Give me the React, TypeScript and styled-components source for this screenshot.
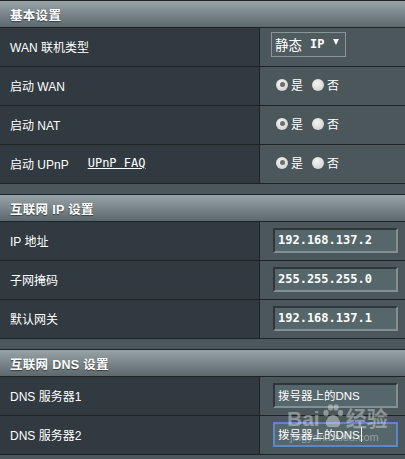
import styled, { createGlobalStyle } from 'styled-components';

const GlobalStyle = createGlobalStyle`
  html, body {
    margin: 0;
    padding: 0;
    background: #4b575b;
  }
  body {
    font-family: "Liberation Sans", Arial, "Noto Sans CJK SC", sans-serif;
    width: 405px;
    overflow: hidden;
  }
`;

const Page = styled.div`
  width: 405px;
  display: flex;
  flex-direction: column;
  gap: 10px;
  background: #4b575b;
`;

const Section = styled.section`
  border-top: 1px solid #1e2326;
`;

const Header = styled.div`
  height: 27px;
  box-sizing: border-box;
  padding-left: 10px;
  display: flex;
  align-items: center;
  background: linear-gradient(#98a3a7, #5c686d);
  color: #fff;
  font-weight: bold;
  font-size: 12.5px;
  letter-spacing: 0.3px;
  text-shadow: 0 1px 1px rgba(0, 0, 0, 0.5);
  border-bottom: 1px solid #1e2326;
`;

const Row = styled.div`
  display: grid;
  grid-template-columns: 260px 1fr;
  height: 39px;
  box-sizing: border-box;
  border-bottom: 1px solid #1e2326;
`;

const Label = styled.div`
  background: #313a40;
  border-right: 1px solid #1e2326;
  color: #fff;
  font-size: 12px;
  padding-left: 10px;
  display: flex;
  align-items: center;
  padding-bottom: 2px;
`;

const Link = styled.a`
  color: #fff;
  font-family: "DejaVu Sans Mono", "Liberation Mono", monospace;
  font-size: 12px;
  text-decoration: underline;
  margin-left: 19px;
  white-space: pre;
`;

const Cell = styled.div`
  background: #4b575b;
  display: flex;
  align-items: center;
  padding-left: 11px;
`;

const Select = styled.div`
  width: 75px;
  height: 25px;
  box-sizing: border-box;
  border: 1px solid #8b9598;
  background: #4e5b5f;
  color: #fff;
  display: flex;
  align-items: center;
  padding: 0 0 0 3px;
  font-size: 13.5px;
  margin-top: -6px;
`;

const Mono = styled.span`
  font-family: "DejaVu Sans Mono", "Liberation Mono", monospace;
  font-weight: bold;
  font-size: 12px;
  margin-left: 8px;
`;

const Caret = styled.span`
  width: 0;
  height: 0;
  border-left: 3px solid transparent;
  border-right: 3px solid transparent;
  border-top: 6px solid #fff;
  margin-left: 9px;
  margin-top: -4px;
`;

const RadioGroup = styled.div`
  display: flex;
  align-items: center;
  color: #fff;
  font-size: 12px;
  margin-left: 5px;
  margin-top: -3px;
`;

const Radio = styled.span<{ $checked?: boolean }>`
  width: 12px;
  height: 12px;
  border-radius: 50%;
  background: radial-gradient(circle at 40% 35%, #f4f4f4, #c9c9c9);
  box-sizing: border-box;
  display: inline-flex;
  align-items: center;
  justify-content: center;
  margin-right: 3px;
  &::after {
    content: '';
    width: 5px;
    height: 5px;
    border-radius: 50%;
    background: ${(p) => (p.$checked ? '#6d6d6d' : 'transparent')};
  }
`;

const Option = styled.span`
  margin-right: 9px;
`;

const Input = styled.div<{ $focus?: boolean; $mono?: boolean }>`
  width: 125px;
  height: 25px;
  box-sizing: border-box;
  margin-left: 2px;
  margin-top: -2px;
  background: #56676b;
  border: 2px solid;
  border-color: ${(p) =>
    p.$focus ? '#5f86c9' : '#2e3639 #829094 #829094 #2e3639'};
  color: #fff;
  display: flex;
  align-items: center;
  padding-left: 3px;
  font-family: ${(p) =>
    p.$mono
      ? '"DejaVu Sans Mono", "Liberation Mono", monospace'
      : '"Liberation Sans", Arial, "Noto Sans CJK SC", sans-serif'};
  font-size: ${(p) => (p.$mono ? '12px' : '11.5px')};
  font-weight: ${(p) => (p.$mono ? 'bold' : 'normal')};
  white-space: nowrap;
`;

const Cursor = styled.span`
  display: inline-block;
  width: 1px;
  height: 15px;
  background: #fff;
  margin-left: 1px;
`;

const Watermark = styled.div`
  position: absolute;
  left: 287px;
  top: 403px;
  color: rgba(225, 230, 232, 0.45);
  font-family: "Liberation Sans", Arial, "Noto Sans CJK SC", sans-serif;
  pointer-events: none;
  line-height: 1;
`;

const WmTop = styled.div`
  font-size: 21px;
  font-weight: bold;
  display: flex;
  align-items: flex-end;
  gap: 1px;
`;

const WmSub = styled.div`
  font-size: 11px;
  margin-left: 3px;
  margin-top: 3px;
`;

const Wrap = styled.div`
  position: relative;
`;

function YesNo() {
  return (
    <RadioGroup>
      <Radio $checked />
      <Option>是</Option>
      <Radio />
      <Option>否</Option>
    </RadioGroup>
  );
}

export default function App() {
  return (
    <Wrap>
      <GlobalStyle />
      <Page>
        <Section>
          <Header>基本设置</Header>
          <Row>
            <Label>WAN 联机类型</Label>
            <Cell>
              <Select>
                <span>静态</span>
                <Mono>IP</Mono>
                <Caret />
              </Select>
            </Cell>
          </Row>
          <Row>
            <Label>启动 WAN</Label>
            <Cell><YesNo /></Cell>
          </Row>
          <Row>
            <Label>启动 NAT</Label>
            <Cell><YesNo /></Cell>
          </Row>
          <Row>
            <Label>
              启动 UPnP
              <Link href="#">UPnP FAQ</Link>
            </Label>
            <Cell><YesNo /></Cell>
          </Row>
        </Section>
        <Section>
          <Header>互联网 IP 设置</Header>
          <Row>
            <Label>IP 地址</Label>
            <Cell><Input $mono>192.168.137.2</Input></Cell>
          </Row>
          <Row>
            <Label>子网掩码</Label>
            <Cell><Input $mono>255.255.255.0</Input></Cell>
          </Row>
          <Row>
            <Label>默认网关</Label>
            <Cell><Input $mono>192.168.137.1</Input></Cell>
          </Row>
        </Section>
        <Section>
          <Header>互联网 DNS 设置</Header>
          <Row>
            <Label>DNS 服务器1</Label>
            <Cell><Input>拨号器上的DNS</Input></Cell>
          </Row>
          <Row>
            <Label>DNS 服务器2</Label>
            <Cell>
              <Input $focus>
                拨号器上的DNS
                <Cursor />
              </Input>
            </Cell>
          </Row>
        </Section>
      </Page>
      <Watermark>
        <WmTop>
          Bai
          <svg width="24" height="26" viewBox="0 0 24 26">
            <g fill="currentColor">
              <ellipse cx="5" cy="10" rx="2.6" ry="3.2" />
              <ellipse cx="9.5" cy="4.5" rx="2.6" ry="3.2" />
              <ellipse cx="15" cy="4.5" rx="2.6" ry="3.2" />
              <ellipse cx="19.5" cy="10" rx="2.6" ry="3.2" />
              <path d="M12 12 C7.5 12 4 18 5 21.5 C6 25 9.5 24 12 24 C14.5 24 18 25 19 21.5 C20 18 16.5 12 12 12 Z" />
            </g>
          </svg>
          经验
        </WmTop>
        <WmSub>jingyan.baidu.com</WmSub>
      </Watermark>
    </Wrap>
  );
}
